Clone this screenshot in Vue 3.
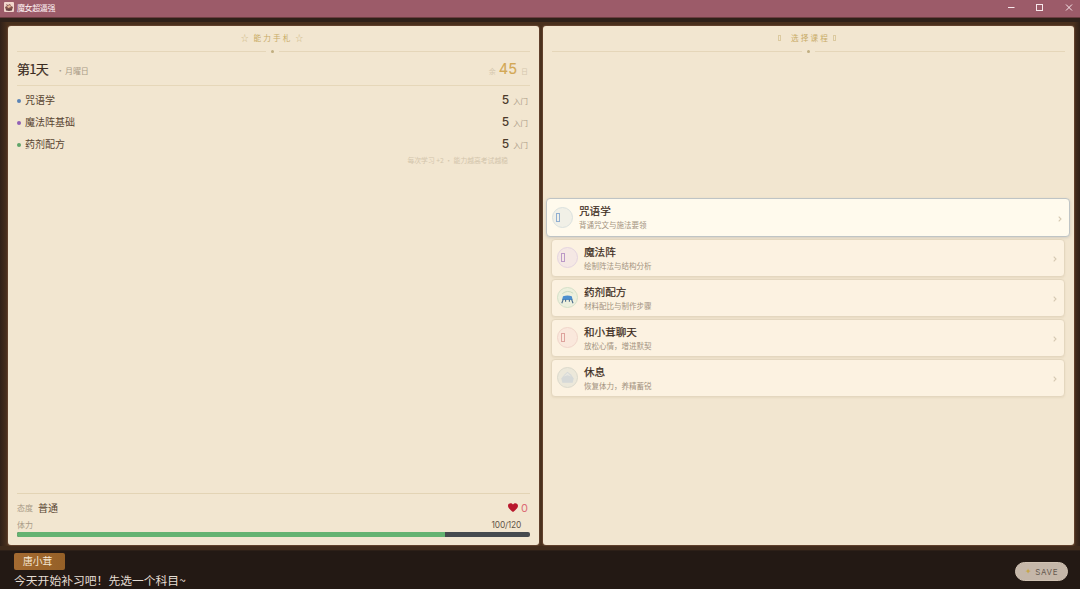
<script setup>
const skills = [
  { name: '咒语学', color: '#5a83b5' },
  { name: '魔法阵基础', color: '#9160b5' },
  { name: '药剂配方', color: '#5fa568' },
]
const courses = [
  { name: '咒语学', desc: '背诵咒文与施法要领', kind: 'blue', active: true },
  { name: '魔法阵', desc: '绘制阵法与结构分析', kind: 'purple' },
  { name: '药剂配方', desc: '材料配比与制作步骤', kind: 'green' },
  { name: '和小茸聊天', desc: '放松心情，增进默契', kind: 'red' },
  { name: '休息', desc: '恢复体力，养精蓄锐', kind: 'gray' },
]
const stamina = { now: 100, max: 120 }
</script>

<template>
  <div class="window">
    <header class="titlebar">
      <svg class="logo" viewBox="0 0 10 10">
        <rect width="10" height="10" rx="1" fill="#f1d5cc" />
        <path d="M1 5l2-1-1-2 2 1 2-1 1 2 2 1-1 3-3 1-3-1z" fill="#80504b" />
        <path d="M3 4l3-1 1 2-3 1z" fill="#e6b999" /><path d="M2 8h6" stroke="#4a3038" stroke-width=".8" />
      </svg>
      <span class="title">魔女超逼强</span>
      <svg class="controls" viewBox="0 0 66 10" fill="none" stroke="#f8e8ec" stroke-width="1">
        <path d="M1 5.5h6.5M59 2.5l6 6m0-6l-6 6" /><rect x="29.5" y="2.5" width="6" height="6" />
      </svg>
    </header>

    <main class="book">
      <section class="page left">
        <h2 class="heading"><i>☆</i><span>能力手札</span><i>☆</i></h2>
        <div class="ornament"><b></b></div>
        <div class="dayrow">
          <span class="day">第1天</span><span class="weekday">· 月曜日</span>
          <span class="remain">余</span><span class="count">45</span><span class="remain">日</span>
        </div>
        <div class="skills">
          <div v-for="s in skills" :key="s.name" class="skill">
            <span class="dot" :style="{ background: s.color }"></span>
            <span class="skill-name">{{ s.name }}</span>
            <span class="score">5</span><span class="rank">入门</span>
          </div>
        </div>
        <div class="hint">每次学习 +2 · 能力越高考试越稳</div>
        <footer class="status">
          <div class="mood">
            <span class="label">态度</span><span class="mood-name">普通</span>
            <svg class="heart" viewBox="0 0 10 9"><path d="M5 9C3 7.4 0 5.2 0 2.7 0 .1 3.5-.8 5 1.6 6.5-.8 10 .1 10 2.7 10 5.2 7 7.4 5 9z" fill="#b9182d" /></svg>
            <span class="love">0</span>
          </div>
          <div class="energy"><span class="label">体力</span><span class="amount">{{ stamina.now }}/{{ stamina.max }}</span></div>
          <div class="track"><div class="fill" :style="{ width: (stamina.now / stamina.max) * 100 + '%' }"></div></div>
        </footer>
      </section>

      <section class="page right">
        <h2 class="heading course-heading"><em></em><span>选择课程</span><em></em></h2>
        <div class="ornament"><b></b></div>
        <div class="courses">
          <div v-for="c in courses" :key="c.name" class="course" :class="{ active: c.active }">
            <div class="badge" :class="c.kind">
              <svg v-if="c.kind === 'green'" viewBox="0 0 20 20">
                <path d="M4.5 6Q10 1.5 16 5.5" fill="none" stroke="#c5d8c0" stroke-width="1" />
                <path d="M5.3 8.6q4.7-1.2 9.2 0l1 4H4.2z" fill="#4c8fce" />
                <path d="M5.5 12l-1.5 4M8 12v2.5M12 12v2.5M14.3 12l1.5 4" fill="none" stroke="#4d6d8d" stroke-width="1.2" />
              </svg>
              <svg v-else-if="c.kind === 'gray'" viewBox="0 0 20 20">
                <path d="M3.5 11l3-4L10 4l4 3 2.5 4-1 4.5h-11z" fill="#d6d9d8" />
                <path d="M6 9l4-4 4 4-4-1.5z" fill="#e8e7e0" />
              </svg>
              <span v-else class="tofu"></span>
            </div>
            <div class="copy"><div class="name">{{ c.name }}</div><div class="desc">{{ c.desc }}</div></div>
            <svg class="arrow" viewBox="0 0 4 6"><path d="M.7.6L3 3 .7 5.4" fill="none" stroke="#d6c9b2" stroke-width="1.1" /></svg>
          </div>
        </div>
      </section>
    </main>

    <footer class="dialogue">
      <div class="speech"><div class="speaker">唐小茸</div><div class="line">今天开始补习吧！先选一个科目~</div></div>
      <button class="save"><span>✦</span>SAVE</button>
    </footer>
  </div>
</template>

<style>
body { margin: 0; overflow: hidden; background: #231914; }
</style>
<style scoped>
* { box-sizing: border-box; }
.window { width: 1080px; height: 589px; display: flex; flex-direction: column; overflow: hidden; font-family: "Noto Sans CJK SC", sans-serif; color: #4c3a2b; background: #231914; }
.titlebar { height: 17px; flex: none; display: flex; align-items: center; padding: 0 7px 2px 4px; background: #9c5b69; box-shadow: 0 1px #6c3d40; position: relative; }
.logo { width: 10px; height: 10px; margin-top: -1px; }
.title { margin-left: 3px; font-size: 8px; line-height: 15px; color: #fff3f5; letter-spacing: -.4px; }
.controls { width: 66px; height: 10px; margin-left: auto; margin-top: -1px; }
.book { height: 533px; flex: none; display: grid; grid-template-columns: 531px 531px; gap: 4px; padding: 9px 6px 5px 8px; background: linear-gradient(90deg, #302017, #49301d 7px, #49301d 1074px, #302017); border-top: 5px solid #2f2119; box-shadow: inset 0 -4px #402b1b; }
.page { height: 519px; margin-top: -5px; display: flex; flex-direction: column; background: #f2e6d0; border-radius: 3px; padding: 0 9px; min-width: 0; box-shadow: 0 0 1px 1px #63432e; }
.heading { height: 24px; margin: 0; padding: 0 3px 0 0; display: flex; align-items: center; justify-content: center; font-weight: 400; font-size: 7.6px; line-height: 10px; letter-spacing: 2.1px; color: #c8ab66; }
.heading i { font-style: normal; color: #cdb681; font-size: 7.5px; letter-spacing: 0; }
.heading span { margin: 0 3px 0 5px; }
.heading em { width: 3px; height: 6px; border: 1px solid #dccaa0; }
.heading.course-heading span { margin: 0 3px 0 10px; }
.ornament { height: 3px; display: flex; align-items: center; gap: 6px; padding-right: 0; }
.ornament::before, .ornament::after { content: ""; height: 1px; flex: 1; background: #e5d6b9; }
.ornament::before { flex: 0 0 249px; }
.ornament b { width: 3px; height: 3px; margin: 0 -1px; border-radius: 50%; background: #c0ae80; }
.right .ornament::before { flex-basis: 250px; }
.dayrow { height: 33px; flex: none; display: flex; align-items: center; border-bottom: 1px solid #e6d7b9; padding: 0 2px 0 0; }
.day { font-size: 13px; line-height: 20px; font-weight: 400; letter-spacing: -.7px; color: #3b2b1f; -webkit-text-stroke: .2px #3b2b1f; }
.weekday { margin: 2px auto 0 8px; font-size: 8px; letter-spacing: -.1px; word-spacing: -.7px; color: #a99b87; }
.remain { margin-top: 4px; font-size: 7px; color: #d4c6ae; }
.count { margin: 0 4px 0 3px; font-family: Inter, sans-serif; font-size: 14.5px; line-height: 20px; font-weight: 400; color: #d3a855; -webkit-text-stroke: .15px #d3a855; }
.skills { padding-top: 3px; }
.skill { height: 22px; display: flex; align-items: center; padding-right: 2px; }
.dot { width: 4px; height: 4px; margin-top: 1px; border-radius: 50%; }
.skill-name { margin-left: 4px; font-size: 10px; line-height: 16px; color: #594532; font-weight: 400; }
.score { margin-left: auto; font-family: Inter, sans-serif; font-size: 12px; line-height: 16px; font-weight: 500; }
.rank { margin-left: 4px; font-size: 7.4px; color: #ab9b85; }
.hint { text-align: right; padding-right: 22px; font-size: 6.8px; line-height: 9px; color: #d3c5ac; margin-top: 1px; }
.status { margin-top: auto; height: 52px; border-top: 1px solid #e3d4b5; padding-top: 4px; }
.mood { height: 19px; display: flex; align-items: center; padding-right: 2px; }
.label { font-size: 8px; line-height: 12px; color: #a99b87; }
.mood-name { margin-left: 5px; font-size: 10px; line-height: 16px; color: #594532; font-weight: 400; }
.heart { width: 10px; height: 9px; margin: 0 3px 0 auto; }
.love { font-family: Inter, sans-serif; font-size: 11px; line-height: 16px; color: #dc6b76; }
.energy { height: 15px; display: flex; align-items: center; justify-content: space-between; padding-right: 9px; }
.amount { font-family: Inter, sans-serif; font-size: 8.4px; line-height: 12px; letter-spacing: -.2px; color: #625548; }
.track { height: 5px; background: #464a4e; border-radius: 2px; overflow: hidden; }
.fill { height: 5px; background: #64b371; }
.courses { flex: 1; display: flex; flex-direction: column; justify-content: center; gap: 2px; margin: 0 0 0 -1px; padding-bottom: 4px; }
.course { height: 38px; display: flex; align-items: center; padding: 0 7px 0 5px; background: #fcf2e1; border: 1px solid #e4d7bf; border-radius: 4px; box-shadow: 0 1px 2px #cdbd9a44; }
.course.active { height: 39px; margin: 0 -5px; background: #fffaed; border-color: #bfc4c5; box-shadow: 0 1px 3px #7e899a44; }
.badge { width: 21px; height: 21px; border-radius: 50%; border: 1px solid; display: flex; align-items: center; position: relative; }
.badge svg { width: 19px; height: 19px; }
.tofu { width: 4px; height: 9px; border: 1px solid currentColor; margin-left: 3px; }
.badge.blue { background: #f1f0e7; border-color: #dae1df; color: #91afd1; }
.badge.purple { background: #f5e8e4; border-color: #e4d4e0; color: #bc9ac7; }
.badge.green { background: #edf0dd; border-color: #d4e0c8; }
.badge.red { background: #fae8dc; border-color: #f0d5ca; color: #dea39d; }
.badge.gray { background: #ece8da; border-color: #dbd9cc; }
.copy { margin-left: 6px; display: flex; flex-direction: column; gap: 1px; padding: 0; }
.name { font-size: 10.6px; line-height: 14px; font-weight: 400; color: #3b2b20; -webkit-text-stroke: .2px #3b2b20; }
.desc { font-size: 7.5px; line-height: 11px; color: #a39380; }
.arrow { width: 4px; height: 6px; margin: 3px 0 0 auto; }
.dialogue { flex: 1; display: flex; justify-content: space-between; padding: 2px 12px 0 14px; background: #231914; border-top: 1px solid #2d2018; }
.speech { display: flex; flex-direction: column; align-items: flex-start; }
.speaker { height: 17px; width: 51px; padding-left: 9px; font-size: 9.8px; line-height: 16px; color: #f6e9d4; background: linear-gradient(90deg, #a36a31, #956027); border-radius: 2px; }
.line { margin-top: 1px; font-size: 11.8px; line-height: 18px; color: #e5ddd3; white-space: nowrap; }
.save { height: 19px; width: 53px; margin: 9px 0 0; padding: 0; display: flex; align-items: center; justify-content: center; gap: 3px; border: 1px solid #d0c2b3; border-radius: 10px; background: #c5b7a9; color: #655a50; font: 8px Inter, sans-serif; letter-spacing: .6px; }
.save span { color: #c7a64d; font-size: 8px; font-family: "DejaVu Sans", sans-serif; }
</style>
